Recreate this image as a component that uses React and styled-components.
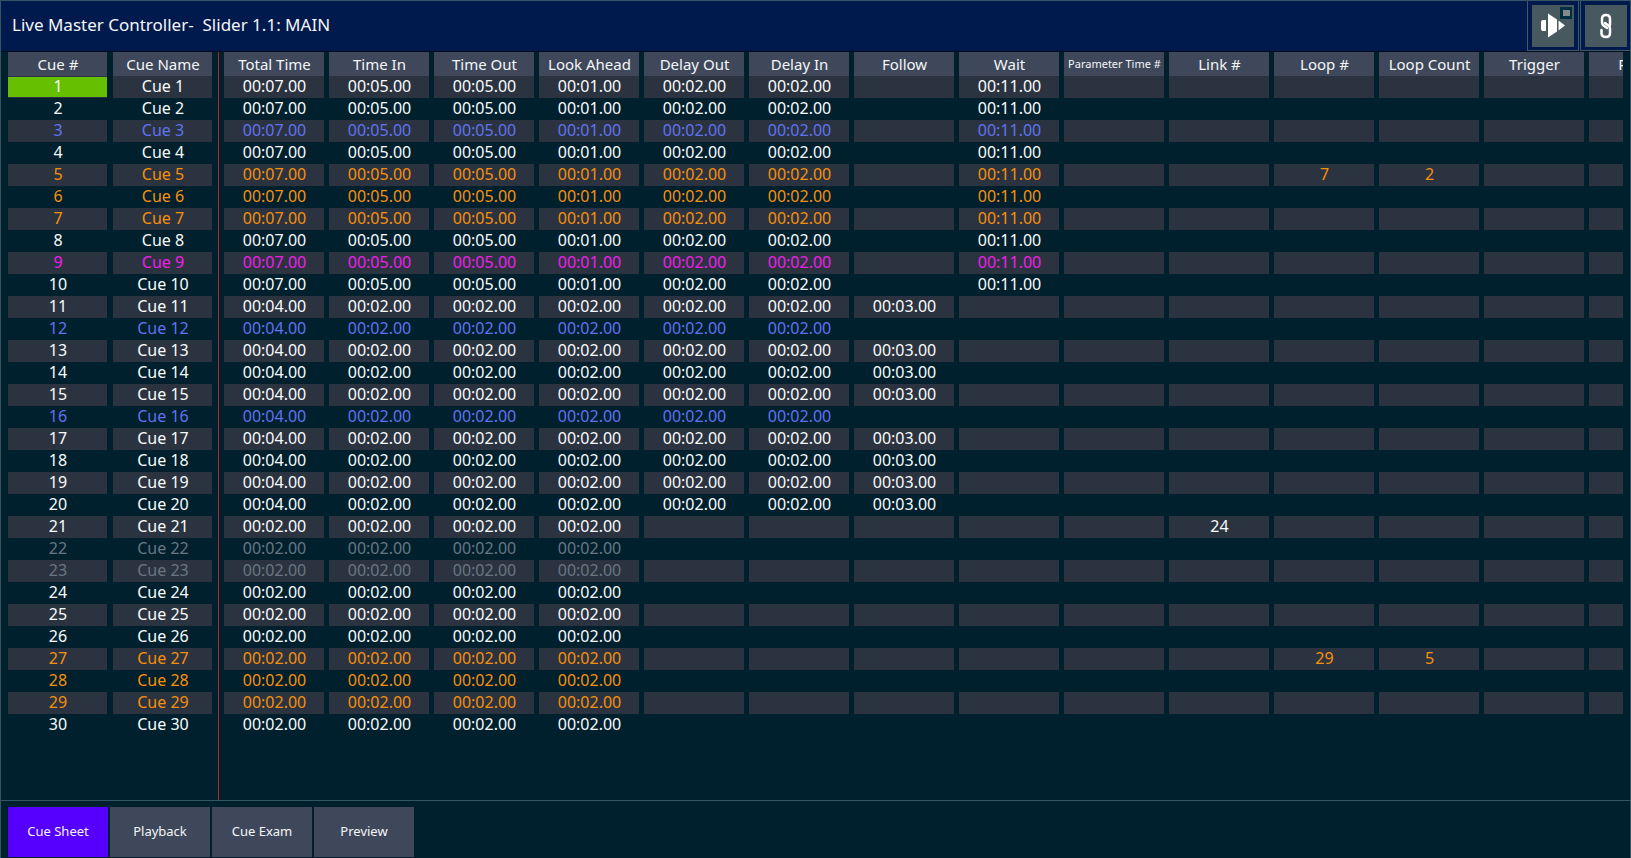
import React from "react";
import styled, { createGlobalStyle } from "styled-components";

const GlobalStyle = createGlobalStyle`
  *, *::before, *::after { box-sizing: border-box; }
  html, body, #root { height: 100%; }
  body {
    margin: 0;
    background: #00202e;
    color: #f4f6f8;
    font-family: "Noto Sans", "Open Sans", sans-serif;
    font-size: 16px;
  }
`;

const Window = styled.div`
  display: flex;
  flex-direction: column;
  min-height: 100%;
  border: 1px solid #365464;
  border-bottom: 0;
`;

const TitleBar = styled.header`
  display: flex;
  align-items: stretch;
  justify-content: space-between;
  height: 51px;
  background: #001a4d;
  border-bottom: 1px solid #000a1c;
`;

const Title = styled.h1`
  margin: 0;
  padding: 0 11px;
  font-size: 17px;
  font-weight: 400;
  line-height: 48px;
  white-space: pre;
`;

const Actions = styled.div`
  display: flex;
  gap: 1px;
`;

const ActionSlot = styled.div`
  display: flex;
  padding: 4px 4px 3px;
  border: solid #3c5a68;
  border-width: 0 1px 1px;

  &:last-child {
    padding-right: 3px;
    border-right: 0;
  }
`;

const IconButton = styled.button`
  width: 42px;
  padding: 0;
  border: 0;
  background: #47595f;
  color: #fff;
  cursor: pointer;

  svg { display: block; }
`;

const Sheet = styled.main`
  display: flex;
  flex: 1;
  padding: 0 7px 0 1px;
`;

const FrozenPane = styled.div`
  flex: none;
  border-right: 1px solid #b3262c;
`;

const ScrollPane = styled.div`
  flex: 1;
  min-width: 0;
  overflow-x: auto;
  scrollbar-width: none;
`;

const Table = styled.table`
  table-layout: fixed;
  width: ${(p) => p.$columns * (p.$cell + p.$gap) + p.$gap}px;
  border-collapse: separate;
  border-spacing: ${(p) => p.$gap}px 0;
`;

const HeadCell = styled.th`
  height: 24px;
  padding: 0 0 0 1px;
  background: #3f485a;
  font-size: ${(p) => (p.$small ? 11 : 15)}px;
  font-weight: 400;
  line-height: 24px;
  white-space: nowrap;
`;

const tones = {
  normal: "#f8fbfc",
  blue: "#5f73f0",
  orange: "#f5900a",
  magenta: "#f01eea",
  muted: "#687782",
};

const Cell = styled.td`
  height: 22px;
  padding: 0 0 0 1px;
  line-height: 20px;
  text-align: center;
  vertical-align: top;
  white-space: nowrap;
  background: ${(p) => (p.$active ? "#66bf00" : "transparent")};
  box-shadow: ${(p) => (p.$active ? "inset 0 1px #2c3340, inset 0 -1px #2c3340" : "none")};
`;

const Row = styled.tr`
  color: ${(p) => tones[p.$tone]};

  &:nth-child(odd) > td:not([aria-current]) { background: #2c3340; }
`;

const TabBar = styled.nav`
  display: flex;
  gap: 2px;
  padding: 6px 7px 1px;
  border-top: 1px solid #365464;
`;

const Tab = styled.button`
  width: 100px;
  height: 50px;
  padding: 0 0 3px;
  border: 0;
  background: ${(p) => (p.$active ? "#5500ff" : "#3f485a")};
  color: #f4f6f8;
  font-family: inherit;
  font-size: 13px;
  cursor: pointer;
`;

const frozenColumns = ["Cue #", "Cue Name"];
const columns = [
  "Total Time", "Time In", "Time Out", "Look Ahead", "Delay Out", "Delay In", "Follow",
  "Wait", "Parameter Time #", "Link #", "Loop #", "Loop Count", "Trigger", "Pause",
];

const toneByCue = {
  3: "blue", 12: "blue", 16: "blue",
  5: "orange", 6: "orange", 7: "orange", 27: "orange", 28: "orange", 29: "orange",
  9: "magenta", 22: "muted", 23: "muted",
};

const extras = {
  5: { "Loop #": "7", "Loop Count": "2" },
  21: { "Link #": "24" },
  27: { "Loop #": "29", "Loop Count": "5" },
};

const timing = (n) => {
  if (n <= 10) {
    return {
      "Total Time": "00:07.00", "Time In": "00:05.00", "Time Out": "00:05.00",
      "Look Ahead": "00:01.00", "Delay Out": "00:02.00", "Delay In": "00:02.00", Wait: "00:11.00",
    };
  }
  const base = { "Time In": "00:02.00", "Time Out": "00:02.00", "Look Ahead": "00:02.00" };
  if (n > 20) return { ...base, "Total Time": "00:02.00" };
  return {
    ...base, "Total Time": "00:04.00", "Delay Out": "00:02.00", "Delay In": "00:02.00",
    Follow: n === 12 || n === 16 ? "" : "00:03.00",
  };
};

const activeCue = 1;
const cues = Array.from({ length: 30 }, (_, i) => {
  const n = i + 1;
  return { n, tone: toneByCue[n] || "normal", values: { ...timing(n), ...extras[n] } };
});

const OutputIcon = () => (
  <svg width="42" height="42" viewBox="0 0 42 42" aria-hidden="true">
    <path d="M11 15h3v11h-3q-2 0-2-2v-7q0-2 2-2z" fill="#fff" />
    <path d="M16 8.500l9 6v12l-9 6z" fill="#fff" />
    <path d="M26.500 15.500l6.500 5l-6.500 5z" fill="#fff" />
    <rect x="28" y="2" width="12" height="12" fill="#002e42" />
    <rect x="31" y="5" width="7" height="6" fill="#85898a" />
  </svg>
);

const LinkIcon = () => (
  <svg width="42" height="42" viewBox="0 0 42 42" fill="none" stroke="#fff" strokeWidth="2.500" strokeLinecap="round" aria-hidden="true">
    <path d="M22 23l-4-3q-1-1-1-3v-3q0-4 4-4t4 4v6" />
    <path d="M20 18l4 3q1 1 1 3v4q0 4-4 4t-4.500-3v-4" />
  </svg>
);

export default function App() {
  return (
    <>
      <GlobalStyle />
      <Window>
        <TitleBar>
          <Title>{"Live Master Controller-  Slider 1.1: MAIN"}</Title>
          <Actions>
            <ActionSlot><IconButton aria-label="Output"><OutputIcon /></IconButton></ActionSlot>
            <ActionSlot><IconButton aria-label="Link"><LinkIcon /></IconButton></ActionSlot>
          </Actions>
        </TitleBar>
        <Sheet>
          <FrozenPane>
            <Table $columns={2} $cell={99} $gap={6}>
              <thead>
                <tr>{frozenColumns.map((c) => <HeadCell key={c} scope="col">{c}</HeadCell>)}</tr>
              </thead>
              <tbody>
                {cues.map(({ n, tone }) => (
                  <Row key={n} $tone={tone}>
                    <Cell $active={n === activeCue} aria-current={n === activeCue ? "true" : undefined}>{n}</Cell>
                    <Cell>Cue {n}</Cell>
                  </Row>
                ))}
              </tbody>
            </Table>
          </FrozenPane>
          <ScrollPane>
            <Table $columns={columns.length} $cell={100} $gap={5}>
              <thead>
                <tr>
                  {columns.map((c) => (
                    <HeadCell key={c} scope="col" $small={c.length > 12}>{c}</HeadCell>
                  ))}
                </tr>
              </thead>
              <tbody>
                {cues.map(({ n, tone, values }) => (
                  <Row key={n} $tone={tone}>
                    {columns.map((c) => <Cell key={c}>{values[c]}</Cell>)}
                  </Row>
                ))}
              </tbody>
            </Table>
          </ScrollPane>
        </Sheet>
        <TabBar>
          {["Cue Sheet", "Playback", "Cue Exam", "Preview"].map((t, i) => (
            <Tab key={t} $active={i === 0}>{t}</Tab>
          ))}
        </TabBar>
      </Window>
    </>
  );
}
